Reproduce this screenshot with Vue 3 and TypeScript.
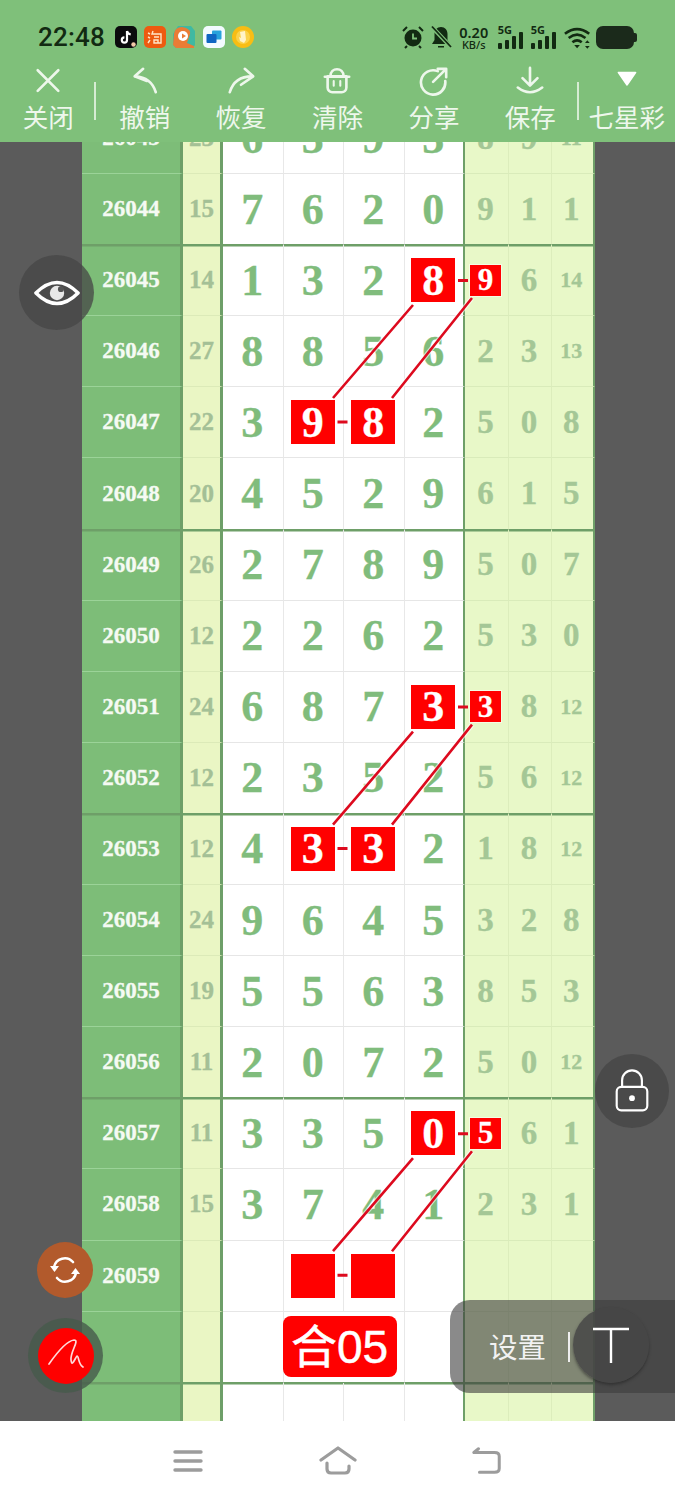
<script setup lang="ts">
interface Row {
  id: string
  sum: string
  nums: string[]
  tail: string[]
  hits?: boolean
  box?: number[]
}

const raw: [string, string, string, string][] = [
  ['26043', '23', '6393', '8 9 11'],
  ['26044', '15', '7620', '9 1 1'],
  ['26045', '14', '1328', '9 6 14'],
  ['26046', '27', '8856', '2 3 13'],
  ['26047', '22', '3982', '5 0 8'],
  ['26048', '20', '4529', '6 1 5'],
  ['26049', '26', '2789', '5 0 7'],
  ['26050', '12', '2262', '5 3 0'],
  ['26051', '24', '6873', '3 8 12'],
  ['26052', '12', '2352', '5 6 12'],
  ['26053', '12', '4332', '1 8 12'],
  ['26054', '24', '9645', '3 2 8'],
  ['26055', '19', '5563', '8 5 3'],
  ['26056', '11', '2072', '5 0 12'],
  ['26057', '11', '3350', '5 6 1'],
  ['26058', '15', '3741', '2 3 1'],
]

const tops = ['26045', '26051', '26057']
const bottoms = ['26047', '26053']

const rows: Row[] = raw.map(([id, sum, nums, tail]) => ({
  id,
  sum,
  nums: nums.split(''),
  tail: tail.split(' '),
  hits: tops.includes(id),
  box: tops.includes(id) ? [3] : bottoms.includes(id) ? [1, 2] : [],
}))

const tools = [
  { key: 'close', label: '关闭', sep: true },
  { key: 'undo', label: '撤销' },
  { key: 'redo', label: '恢复' },
  { key: 'clear', label: '清除' },
  { key: 'share', label: '分享' },
  { key: 'save', label: '保存', sep: true },
  { key: 'type', label: '七星彩' },
]

// one set of connectors per highlighted group, 6 rows apart
const groupOffsets = [0, 426.6, 853.2]
</script>

<template>
  <div class="screen">
    <header class="top">
      <div class="status">
        <span class="clock">22:48</span>
        <div class="apps">
          <svg class="app" viewBox="0 0 22 22" width="22" height="22">
            <rect width="22" height="22" rx="5" fill="#0b0b0d" />
            <path d="M12 5v9a2.6 2.6 0 1 1-2.6-2.6M12 5c.4 2 1.700 3.200 3.700 3.400" fill="none" stroke="#fff" stroke-width="2.200" />
            <circle cx="18.500" cy="18.500" r="2.200" fill="#f3c9a8" />
          </svg>
          <svg class="app" viewBox="0 0 22 22" width="22" height="22">
            <rect width="22" height="22" rx="5" fill="#ee5a10" />
            <path d="M4 7l2 1M4 11l2 1M4 17l2-3M9 5l-1 3h9v9h-3M10 11h5M10 14h4v3h-4z" fill="none" stroke="#ffe6c8" stroke-width="1.400" />
          </svg>
          <svg class="app" viewBox="0 0 22 22" width="22" height="22">
            <path d="M5 0h13l4 5v14l-2 3H3l-3-3V8z" fill="#3fb9a2" />
            <path d="M1 8q1-7 8-7l4 1q5 2 4 6l-3 9 7 3v2H3l-3-3z" fill="#ea7c35" />
            <circle cx="10" cy="10" r="5" fill="#fff" />
            <path d="M9 7.500l4 2.500-4 2.500z" fill="#ea7c35" />
          </svg>
          <svg class="app" viewBox="0 0 22 22" width="22" height="22">
            <rect width="22" height="22" rx="5" fill="#f3fbff" />
            <rect x="9" y="4.500" width="9.500" height="9" rx="1" fill="#27a3dc" />
            <rect x="3.500" y="8" width="10" height="9" rx="1" fill="#0f66c2" />
          </svg>
          <svg class="app" viewBox="0 0 22 22" width="22" height="22">
            <circle cx="11" cy="11" r="11" fill="#f8bd14" />
            <circle cx="11" cy="11" r="7" fill="#fbd24a" />
            <path d="M8 6l5-1 1 9-2 3-4-2-1-4 2 1z" fill="#fff3c8" />
          </svg>
        </div>
        <div class="sys">
          <svg viewBox="0 0 24 24" width="24" height="24" class="sys-ic">
            <circle cx="12" cy="13" r="8.500" fill="#122a12" />
            <path d="M12 8.500V13.500h4" fill="none" stroke="#7fc07a" stroke-width="1.800" />
            <path d="M2 6l4-4M22 6l-4-4M6 21l-2 2M18 21l2 2" stroke="#122a12" stroke-width="2" />
          </svg>
          <svg viewBox="0 0 24 24" width="24" height="24" class="sys-ic bell">
            <path d="M12 2c-4 0-6.500 3-6.500 7v6L3 19h18l-2.500-4V9c0-4-2.500-7-6.500-7z" fill="#122a12" />
            <path d="M9 21h6v1.500H9z" fill="#122a12" />
            <path d="M3 2l19 20" stroke="#7fc07a" stroke-width="4" />
            <path d="M3 1.500l19 20.500" stroke="#122a12" stroke-width="1.800" />
          </svg>
          <div class="speed"><b>0.20</b><span>KB/s</span></div>
          <div v-for="n in 2" :key="n" class="sim">
            <span class="fiveg">5G</span>
            <i class="bar b1" /><i class="bar b2" /><i class="bar b3" /><i class="bar b4" />
          </div>
          <svg viewBox="0 0 30 24" width="28" height="23" class="wifi">
            <path d="M1 8q13-10 26 0M5 12.500q9-7 18 0M9 17q5-4 10 0" fill="none" stroke="#122a12" stroke-width="2.800" />
            <path d="M11 20h6l-3 3.500z" fill="#122a12" />
            <path d="M25 15l2.500 3h-5zM25 24l2.500-3h-5z" fill="#122a12" />
          </svg>
          <div class="battery"><i /></div>
        </div>
      </div>
      <nav class="toolbar">
        <button v-for="t in tools" :key="t.key" class="tool" :class="{ sep: t.sep }">
          <svg viewBox="0 0 32 32" width="32" height="32">
            <g fill="none" stroke="#eef7ec" stroke-width="2.800" stroke-linecap="round" stroke-linejoin="round">
              <path v-if="t.key === 'close'" d="M5 4.500l22 22M27 4.500l-22 22" />
              <template v-else-if="t.key === 'undo'">
                <path d="M14 3L5 11l13 5" />
                <path d="M5.500 11q17 1 22 17" />
              </template>
              <template v-else-if="t.key === 'redo'">
                <path d="M20 3l9 8-13 9" />
                <path d="M28 11q-19 0-24 17" />
              </template>
              <template v-else-if="t.key === 'clear'">
                <path d="M6 11h20v12a5 5 0 0 1-5 5H11a5 5 0 0 1-5-5z" />
                <path d="M3 11.500h26M9 11c0-10 14-10 14 0" />
                <path d="M12.500 16v5M19.500 16v5" stroke-width="2.200" />
              </template>
              <template v-else-if="t.key === 'share'">
                <path d="M20 5.500A13 13 0 1 0 28 16" />
                <path d="M15 17L29 3M20 3h9v9" />
              </template>
              <template v-else-if="t.key === 'save'">
                <path d="M16 2v18M8 13l8 8 8-8" />
                <path d="M3 23q13 10 26 0" />
              </template>
              <path v-else d="M7 7h18l-9 13z" fill="#fff" stroke="#fff" stroke-width="2" />
            </g>
          </svg>
          <span>{{ t.label }}</span>
        </button>
      </nav>
    </header>

    <main class="board">
      <div class="sheet">
        <div
          v-for="(r, i) in rows"
          :key="r.id"
          class="row"
          :class="{ thick: i % 4 === 1 }"
        >
          <div class="cell id">{{ r.id }}</div>
          <div class="cell sum">{{ r.sum }}</div>
          <div v-for="(n, k) in r.nums" :key="k" class="cell num">
            <span v-if="r.box?.includes(k)" class="hit">{{ n }}</span>
            <template v-else>{{ n }}</template>
          </div>
          <div
            v-for="(n, k) in r.tail"
            :key="k"
            class="cell tail"
            :class="{ small: n.length > 1 }"
          >
            <span v-if="r.hits && k === 0" class="hit mini">{{ n }}</span>
            <template v-else>{{ n }}</template>
          </div>
        </div>

        <div class="row">
          <div class="cell id">26059</div>
          <div class="cell sum" />
          <div class="cell num" />
          <div class="cell num"><span class="hit" /></div>
          <div class="cell num"><span class="hit" /></div>
          <div class="cell num" />
          <div v-for="k in 3" :key="k" class="cell tail" />
        </div>

        <div class="row thick">
          <div class="cell id" />
          <div class="cell sum" />
          <div class="cell num" />
          <div class="cell num merged"><span class="total">合05</span></div>
          <div class="cell num edge" />
          <div v-for="k in 3" :key="k" class="cell tail" />
        </div>

        <div class="row">
          <div class="cell id" />
          <div class="cell sum" />
          <div v-for="k in 4" :key="k" class="cell num" />
          <div v-for="k in 3" :key="k" class="cell tail" />
        </div>
      </div>

      <svg class="links" viewBox="0 0 675 1279" width="675" height="1279">
        <g v-for="off in groupOffsets" :key="off" :transform="`translate(0 ${off})`">
          <g stroke="#fff" stroke-opacity="0.6" stroke-width="5" fill="none">
            <path d="M413 163L333 256M472 156L392 256" />
          </g>
          <g stroke="#dd0a1e" stroke-width="2.600" fill="none">
            <path d="M413 163L333 256M472 156L392 256" />
            <path d="M458 138.500h10M337.500 280h10" stroke-width="3" />
          </g>
        </g>
      </svg>

      <button class="float eye" aria-label="eye">
        <svg viewBox="0 0 48 48" width="46" height="46">
          <path d="M2 24Q24 2 46 24Q24 46 2 24Z" fill="none" stroke="#fff" stroke-width="3.600" stroke-linejoin="round" />
          <circle cx="24" cy="24" r="7.500" fill="#e8e8e8" />
          <circle cx="28" cy="20" r="3" fill="#555" />
        </svg>
      </button>

      <button class="float lock" aria-label="lock">
        <svg viewBox="0 0 40 50" width="40" height="50">
          <path d="M9 21V13a11 11 0 0 1 22 0v8" fill="none" stroke="#fff" stroke-width="2.400" />
          <rect x="3" y="20.500" width="34" height="26" rx="5" fill="none" stroke="#fff" stroke-width="2.400" />
          <circle cx="20" cy="33" r="3.200" fill="#fff" />
        </svg>
      </button>

      <button class="float refresh" aria-label="refresh">
        <svg viewBox="0 0 32 32" width="32" height="32">
          <g fill="none" stroke="#fff" stroke-width="2.600" stroke-linecap="round">
            <path d="M5 13A11 11 0 0 1 24 8" />
            <path d="M27 19A11 11 0 0 1 8 24" />
          </g>
          <path d="M1 12h9l-4.500 6zM22 20h9l-4.500-6z" fill="#fff" />
        </svg>
      </button>

      <button class="float sign" aria-label="pen">
        <span class="sign-dot">
          <svg viewBox="0 0 56 56" width="56" height="56">
            <path d="M11 36C18 26 28 13 36 12C42 12 32 24 33 32C34 40 37 30 39 28C41 28 40 36 45 39" fill="none" stroke="#ffd9d9" stroke-width="1.700" stroke-linecap="round" stroke-linejoin="round" />
          </svg>
        </span>
      </button>

      <div class="settings">
        <span class="settings-label">设置</span>
        <i class="settings-sep" />
        <span class="settings-t">
          <svg viewBox="0 0 40 40" width="40" height="40">
            <path d="M2 4h36M20 4v34" fill="none" stroke="#fff" stroke-width="2.400" />
          </svg>
        </span>
      </div>
    </main>

    <footer class="nav">
      <svg viewBox="0 0 32 28" width="32" height="28">
        <path d="M3 5h26M3 14h26M3 23h26" stroke="#9c9c9c" stroke-width="3.400" stroke-linecap="round" fill="none" />
      </svg>
      <svg viewBox="0 0 38 30" width="38" height="30">
        <path d="M2 14L19 2l17 12M8 17v6q0 4 4 4h14q4 0 4-4v-3" stroke="#9c9c9c" stroke-width="3.200" stroke-linecap="round" stroke-linejoin="round" fill="none" />
      </svg>
      <svg viewBox="0 0 34 30" width="32" height="30">
        <path d="M8 2L3 6h22q5 0 5 4v13q0 4-5 4H9" stroke="#9c9c9c" stroke-width="3.200" stroke-linecap="round" stroke-linejoin="round" fill="none" />
      </svg>
    </footer>
  </div>
</template>

<style scoped>
.screen {
  display: flex;
  flex-direction: column;
  width: 675px;
  height: 1500px;
  overflow: hidden;
  background: #fff;
}

.top {
  flex: none;
  height: 142px;
  background: #7fc07a;
}

.status {
  display: flex;
  align-items: center;
  height: 62px;
  padding: 12px 0 0 38px;
  box-sizing: border-box;
  color: #122a12;
}

.clock {
  width: 77px;
  font: 500 26px/1 Roboto, sans-serif;
  letter-spacing: 0.2px;
}

.apps {
  display: flex;
  gap: 7.200px;
}

.sys {
  display: flex;
  align-items: center;
  margin-left: 147px;
}

.sys-ic {
  flex: none;
  margin-right: 4px;
}

.bell {
  margin-right: 6px;
}

.speed {
  display: flex;
  flex-direction: column;
  width: 30px;
  margin-right: 9px;
  font-family: "Noto Sans", sans-serif;
  text-align: center;
}

.speed b {
  font-size: 14.500px;
  font-weight: 600;
  line-height: 14px;
}

.speed span {
  font-size: 11px;
  font-weight: 500;
  line-height: 11px;
}

.sim {
  position: relative;
  display: flex;
  align-items: flex-end;
  gap: 2.500px;
  width: 26px;
  height: 24px;
  margin-right: 7px;
}

.fiveg {
  position: absolute;
  top: -1px;
  left: 0;
  font: 700 11px/11px "Noto Sans", sans-serif;
}

.bar {
  width: 4.500px;
  background: #122a12;
  border-radius: 1px;
}

.b1 { height: 6px; }
.b2 { height: 9px; }
.b3 { height: 13px; }
.b4 { height: 17px; }

.wifi {
  flex: none;
  margin-right: 4px;
}

.battery {
  position: relative;
  width: 38px;
  height: 23px;
  border-radius: 7px;
  background: #1b2a1b;
}

.battery i {
  position: absolute;
  top: 7px;
  right: -3px;
  width: 3px;
  height: 9px;
  background: #1b2a1b;
  border-radius: 0 2px 2px 0;
}

.toolbar {
  display: flex;
  height: 80px;
}

.tool {
  position: relative;
  display: flex;
  flex: 1 1 0;
  flex-direction: column;
  align-items: center;
  padding: 4px 0 0;
  border: 0;
  background: none;
  color: #eef7ec;
  font-family: "Noto Sans CJK SC", sans-serif;
}

.tool svg {
  flex: none;
  width: 30px;
  height: 30px;
  margin-bottom: 2px;
}

.tool span {
  font-size: 25.500px;
  line-height: 36px;
  white-space: nowrap;
}

.tool.sep::after {
  content: "";
  position: absolute;
  top: 20px;
  right: 0;
  width: 2px;
  height: 38px;
  background: #d6ecd3;
}

.board {
  position: relative;
  flex: 1;
  overflow: hidden;
  background: #5b5b5b;
}

.sheet {
  width: 512px;
  margin: -39px 0 0 82px;
}

.row {
  display: grid;
  grid-template-columns: 101px 40px repeat(4, 60.500px) 44px 43px 42.500px;
  height: 71.100px;
}

.cell {
  display: flex;
  align-items: center;
  justify-content: center;
  box-sizing: border-box;
  border-bottom: 1px solid #e6e6e6;
  font-family: "Liberation Serif", serif;
  font-weight: 700;
  -webkit-text-stroke: 0.3px currentColor;
}

.id {
  border-right: 3px solid #6e9f68;
  border-bottom: 1.500px solid #9bd398;
  background: #7dbd78;
  color: #f5faf3;
  font-size: 23px;
}

.sum {
  border-right: 3px solid #6e9f68;
  border-bottom-color: #dceab8;
  background: #eaf6c4;
  color: #a4c096;
  font-size: 25px;
}

.num {
  padding-right: 1px;
  border-right: 1px solid #e8e8e8;
  background: #fff;
  color: #80bc7c;
  font-size: 44px;
}

.num:nth-child(6),
.num.edge {
  border-right: 2.500px solid #6e9f68;
}

.tail {
  padding-right: 2px;
  border-right: 1px solid #dcedbc;
  border-bottom-color: #d9ebba;
  background: #e8f8c8;
  color: #a4c796;
  font-size: 33px;
}

.tail:last-child {
  border-right: 2.500px solid #6e9f68;
}

.tail.small {
  font-size: 22px;
}

/* group line drawn inside the cells so the digits stay on the same centre */
.row.thick .cell {
  border-bottom-color: #6e9f68;
}

.row.thick + .row .cell {
  box-shadow: inset 0 1.500px 0 #6e9f68;
}

.hit {
  display: flex;
  flex: none;
  align-items: center;
  justify-content: center;
  width: 44px;
  height: 44px;
  background: #f00;
  color: #fff;
  box-shadow: 0 0 0 1px rgba(255, 255, 255, 0.5);
}

.hit.mini {
  width: 31px;
  height: 31px;
  font-size: 31px;
}

.merged {
  grid-column: span 2;
  justify-content: flex-start;
  padding: 0;
  border-right: 1px solid #e8e8e8;
}

.total {
  display: flex;
  align-items: center;
  justify-content: center;
  box-sizing: border-box;
  width: 114px;
  height: 61px;
  margin-left: -1px;
  border-radius: 8px;
  background: #f00;
  color: #fff;
  font: 400 46px/1 "Liberation Sans", "Noto Sans CJK SC", sans-serif;
  -webkit-text-stroke: 0.5px #fff;
}

.links {
  position: absolute;
  top: 0;
  left: 0;
  pointer-events: none;
}

.float {
  position: absolute;
  display: flex;
  align-items: center;
  justify-content: center;
  padding: 0;
  border: 0;
  border-radius: 50%;
}

.eye {
  top: 113px;
  left: 19px;
  width: 75px;
  height: 75px;
  background: rgba(70, 70, 70, 0.75);
}

.lock {
  top: 912px;
  left: 595px;
  width: 74px;
  height: 74px;
  background: rgba(70, 70, 70, 0.8);
}

.lock svg {
  width: 36px;
  height: 46px;
}

.refresh {
  top: 1100px;
  left: 37px;
  width: 56px;
  height: 56px;
  background: #b25a2c;
}

.sign {
  top: 1176px;
  left: 28px;
  width: 75px;
  height: 75px;
  background: rgba(70, 90, 75, 0.8);
}

.sign-dot {
  display: flex;
  width: 56px;
  height: 56px;
  border-radius: 50%;
  background: #f00;
}

.settings {
  position: absolute;
  top: 1158px;
  left: 450px;
  display: flex;
  align-items: center;
  box-sizing: border-box;
  width: 225px;
  height: 93px;
  padding-left: 39px;
  border-radius: 20px 0 0 20px;
  background: rgba(60, 60, 60, 0.6);
}

.settings-label {
  color: #f2f2f2;
  font: 400 28.500px/1 "Noto Sans CJK SC", sans-serif;
}

.settings-sep {
  width: 2px;
  height: 30px;
  margin-left: 22px;
  background: #eee;
}

.settings-t {
  display: flex;
  align-items: center;
  justify-content: center;
  width: 76px;
  height: 76px;
  margin: -3px 0 0 3px;
  border-radius: 50%;
  background: rgba(70, 70, 70, 0.85);
  box-shadow: 0 2px 3px rgba(30, 30, 30, 0.5);
}

.nav {
  flex: none;
  display: flex;
  align-items: center;
  justify-content: space-between;
  box-sizing: border-box;
  height: 79px;
  padding: 0 172px 0 172px;
  background: #fff;
}
</style>

<style>
html,
body {
  margin: 0;
  background: #fff;
}
</style>
